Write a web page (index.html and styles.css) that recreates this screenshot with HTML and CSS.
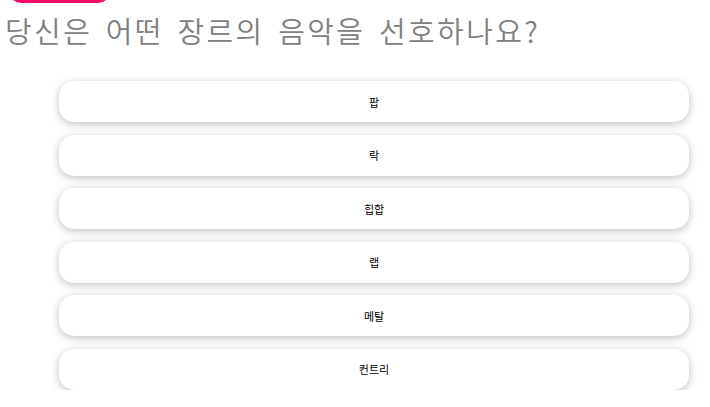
FILE: index.html
```html
<!DOCTYPE html>
<html lang="ko">
<head>
<meta charset="utf-8">
<link rel="stylesheet" href="styles.css">
</head>
<body>
<div class="top-bar"></div>
<h1 class="question">당신은 어떤 장르의 음악을 선호하나요?</h1>
<div class="options">
  <button class="option">팝</button>
  <button class="option">락</button>
  <button class="option">힙합</button>
  <button class="option">랩</button>
  <button class="option">메탈</button>
  <button class="option">컨트리</button>
</div>
</body>
</html>
```
FILE: styles.css
```css
html, body {
  margin: 0;
  padding: 0;
  background: #ffffff;
  overflow: hidden;
}
body {
  font-family: "Noto Sans CJK KR", "Noto Sans", sans-serif;
}
.top-bar {
  width: 101px;
  height: 14px;
  margin: -11px 0 0 9px;
  background: #ff0a64;
  border-radius: 0 0 12px 12px;
}
.question {
  margin: 7px 0 0 5px;
  font-size: 29px;
  font-weight: 350;
  line-height: 40px;
  color: #808080;
  word-spacing: 3px;
  letter-spacing: 2.4px;
}
.options {
  display: flex;
  flex-direction: column;
  gap: 12.6px;
  width: 630px;
  margin: 31px 0 0 59px;
}
.option {
  height: 41px;
  border: none;
  border-radius: 15px;
  background: #ffffff;
  box-shadow: 0 2px 8px rgba(0, 0, 0, 0.25);
  font-family: "Noto Sans CJK KR", sans-serif;
  font-size: 11px;
  font-weight: 400;
  color: #000000;
  padding: 0;
}
```
